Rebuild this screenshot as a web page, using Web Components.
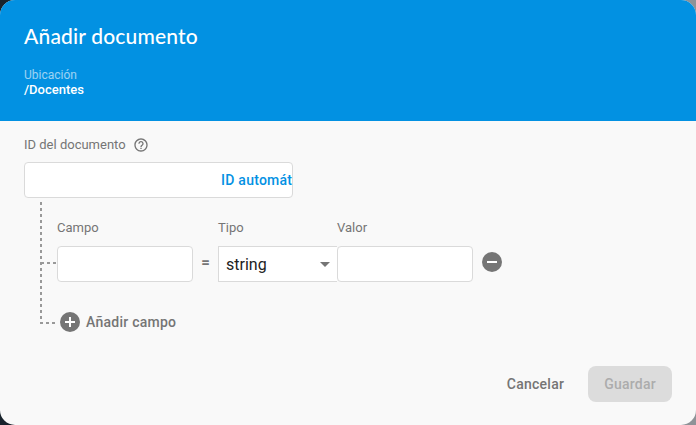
<!DOCTYPE html>
<html lang="es">
<head>
<meta charset="utf-8">
<title>Añadir documento</title>
<style>
html,body{margin:0;height:100%;overflow:hidden}
body{background:linear-gradient(90deg,#18222c 50%,#8e9297 50%);font-family:Roboto,sans-serif;color:#757575}
</style>
</head>
<body>
<app-dialog>
  <dialog-header slot="header" path="/Docentes">Añadir documento</dialog-header>
  <document-id></document-id>
  <field-tree>
    <field-row></field-row>
    <add-field>Añadir campo</add-field>
  </field-tree>
  <action-button slot="actions">Cancelar</action-button>
  <action-button slot="actions" disabled>Guardar</action-button>
</app-dialog>
<script>
const define = (name, html) => customElements.define(name, class extends HTMLElement {
  constructor() {
    super();
    this.attachShadow({mode: 'open'}).innerHTML = '<style>*,:host{box-sizing:border-box}</style>' + html;
  }
  connectedCallback() {
    const p = this.shadowRoot.querySelector('[data-path]');
    if (p) p.textContent = this.getAttribute('path');
  }
});

define('app-dialog', `
<style>
:host{display:flex;flex-direction:column;width:696px;height:425px;border-radius:15px;overflow:hidden;background:#f9f9f9}
main{flex:1;padding:16px 24px 0}
footer{display:flex;justify-content:flex-end;gap:8px;padding:0 24px 23px}
</style>
<slot name="header"></slot><main><slot></slot></main><footer><slot name="actions"></slot></footer>`);

define('dialog-header', `
<style>
:host{display:block;flex:none;height:121px;padding:23px 24px 0;background:#0291e2;color:#fff}
h1{margin:0 0 19px;font:500 21px/26px Lato,sans-serif;letter-spacing:.18px}
small{display:block;font-size:12px;line-height:15px;opacity:.6}
b{display:block;font-weight:500;font-size:13px;line-height:14px}
</style>
<h1><slot></slot></h1><small>Ubicación</small><b data-path></b>`);

define('help-icon', `
<style>:host{display:block;width:16px;height:16px}svg{display:block}</style>
<svg width="16" height="16" viewBox="0 0 24 24" fill="#757575"><path d="M11 18h2v-2h-2v2zm1-16C6.48 2 2 6.48 2 12s4.480 10 10 10 10-4.480 10-10S17.520 2 12 2zm0 18c-4.410 0-8-3.590-8-8s3.590-8 8-8 8 3.590 8 8-3.590 8-8 8zm0-14c-2.210 0-4 1.790-4 4h2c0-1.100.9-2 2-2s2 .9 2 2c0 2-3 1.750-3 5h2c0-2.250 3-2.500 3-5 0-2.210-1.790-4-4-4z"/></svg>`);

define('round-icon', `
<style>:host{display:block;width:24px;height:24px;flex:none}svg{display:block}:host([minus]) .v{display:none}</style>
<svg width="24" height="24" viewBox="0 0 24 24"><circle cx="12" cy="12" r="10" fill="#757575"/><path d="M7 12h10" stroke="#fff" stroke-width="2"/><path class="v" d="M12 7v10" stroke="#fff" stroke-width="2"/></svg>`);

define('text-box', `
<style>:host{display:flex;align-items:center;width:136px;height:36px;border:1px solid #dadada;border-radius:4px;background:#fff}</style><slot></slot>`);

define('document-id', `
<style>
:host{display:block}
.l{display:flex;align-items:center;gap:7px;height:16px;margin-bottom:9px;font-size:13px}
.l span{padding-bottom:2px}
text-box{width:269px}
b{margin-left:196px;white-space:nowrap;font-weight:500;font-size:14px;letter-spacing:.25px;color:#0391e3}
</style>
<div class="l"><span>ID del documento</span><help-icon></help-icon></div><text-box><b>ID automát</b></text-box>`);

define('field-tree', `
<style>
:host{display:block;margin:4px 0 0 16px;padding:17px 0 0 17px;height:148px;
background:
 repeating-linear-gradient(180deg,#999 0 3px,transparent 3px 6px) 0 0/2px 122px no-repeat,
 repeating-linear-gradient(90deg,#999 0 3px,transparent 3px 6px) 1px 60px/15px 2px no-repeat,
 repeating-linear-gradient(90deg,#999 0 3px,transparent 3px 6px) 0 120px/16px 2px no-repeat}
</style><slot></slot>`);

define('field-row', `
<style>
:host{display:grid;grid-template-columns:136px 25px 119px 136px 40px;grid-template-rows:18px 36px;row-gap:9px;font-size:13px;line-height:17px}
.eq{font-size:15px;font-weight:700;align-self:center;justify-self:center;margin-bottom:4px}
.sel{display:flex;align-items:center;justify-content:space-between;border:1px solid #dadada;border-right:0;background:#fff;padding:0 7px;color:#212121;font-size:16px}
.sel i{border:5px solid transparent;border-top-color:#757575;border-bottom:0;margin-top:1px}
round-icon{margin:4px 0 0 7.4px}
</style>
<span>Campo</span><span></span><span>Tipo</span><span>Valor</span><span></span>
<text-box></text-box><span class="eq">=</span><div class="sel">string<i></i></div><text-box></text-box><round-icon minus></round-icon>`);

define('add-field', `
<style>:host{display:flex;align-items:center;gap:4px;margin:28px 0 0 1px;font-size:14px;font-weight:500;letter-spacing:.25px}</style>
<round-icon></round-icon><slot></slot>`);

define('action-button', `
<style>:host{display:flex;align-items:center;height:36px;padding:0 16px;border-radius:8px;font-size:14px;font-weight:500;letter-spacing:.25px}
:host([disabled]){background:#dcdcdc;color:#acacac}</style><slot></slot>`);
</script>
</body>
</html>
